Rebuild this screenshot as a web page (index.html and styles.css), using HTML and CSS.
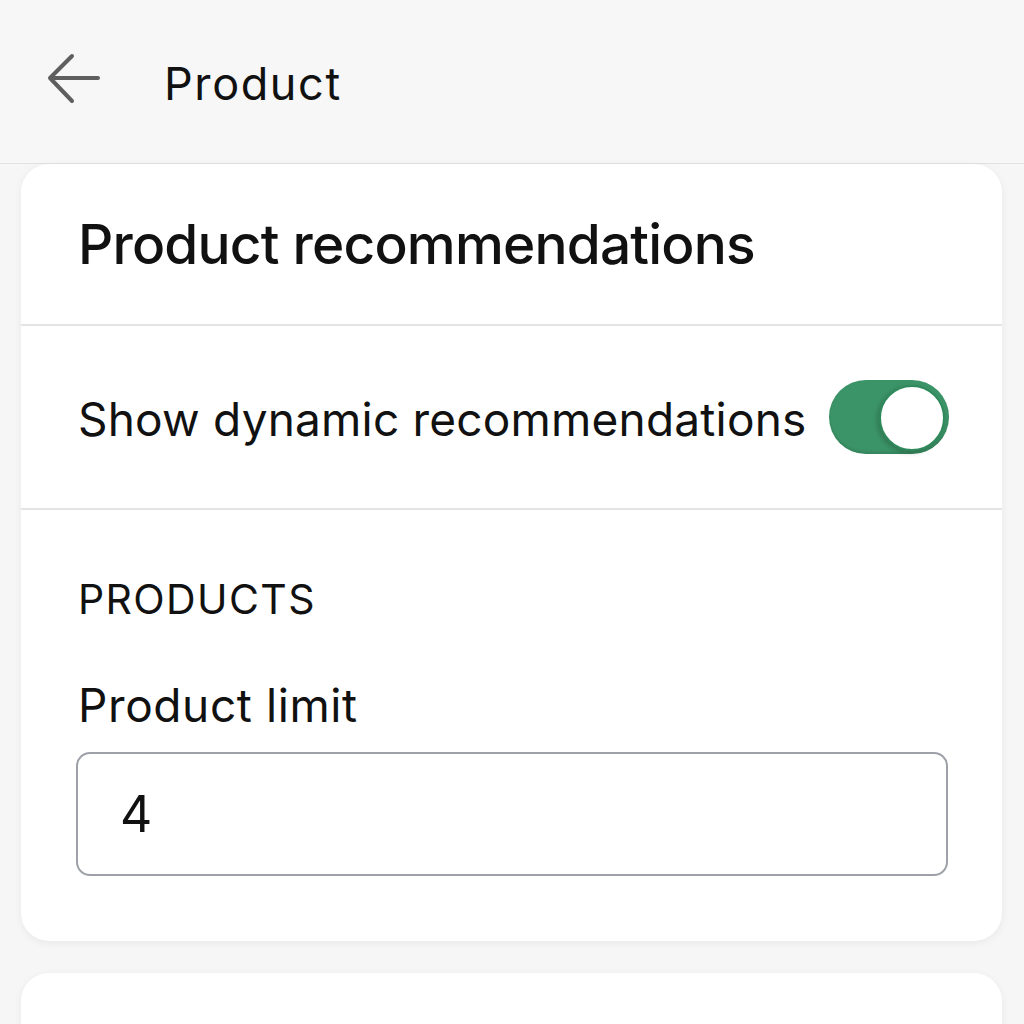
FILE: index.html
```html
<!DOCTYPE html>
<html lang="en">
<head>
<meta charset="UTF-8" />
<meta name="viewport" content="width=device-width, initial-scale=1" />
<title>Product</title>
<link rel="stylesheet" href="styles.css">
</head>
<body>
    <header class="topbar">
        <button class="back" aria-label="Back">
            <svg width="56" height="56" viewBox="0 0 56 56" fill="none" stroke="#5f5f5f" stroke-width="4" stroke-linecap="round" stroke-linejoin="round">
                <path d="M52 25H4M4 25L26 3M4 25L26 48" />
            </svg>
        </button>
        <h1 class="topbar-title">Product</h1>
    </header>

    <main class="content">
        <section class="card">
            <div class="card-head">
                <h2 class="card-title">Product recommendations</h2>
            </div>

            <div class="row toggle-row">
                <span class="row-label">Show dynamic recommendations</span>
                <label class="switch">
                    <input type="checkbox" checked />
                    <span class="track"><span class="knob"></span></span>
                </label>
            </div>

            <div class="card-body">
                <div class="section-label">PRODUCTS</div>
                <label class="field-label" for="limit">Product limit</label>
                <input class="field" id="limit" type="text" value="4" />
            </div>
        </section>

        <section class="card card-next"></section>
    </main>
</body>
</html>
```

FILE: styles.css
```css
/* General Reset */
* {
    margin: 0;
    padding: 0;
    box-sizing: border-box;
}

body {
    font-family: 'Inter', 'Roboto', sans-serif;
    background: #f6f6f6;
    color: #111;
    height: 1024px;
    overflow: hidden;
}

/* Top bar */
.topbar {
    height: 164px;
    background: #f7f7f7;
    border-bottom: 1px solid #e2e2e2;
    display: flex;
    align-items: center;
    padding-left: 46px;
}

.back {
    border: none;
    background: none;
    width: 56px;
    height: 56px;
    display: flex;
    margin-top: -2px;
}

.topbar-title {
    font-size: 45px;
    font-weight: 400;
    margin: 3px 0 0 62px;
    line-height: 1;
    letter-spacing: 1.6px;
    color: #111;
}

/* Cards */
.content {
    padding: 0 22px 0 21px;
}

.card {
    background: #fff;
    border-radius: 28px;
    box-shadow: 0 2px 8px rgba(0, 0, 0, 0.06);
}

.card-head {
    height: 162px;
    display: flex;
    align-items: center;
    padding-left: 57px;
    border-bottom: 2px solid #e4e4e6;
}

.card-title {
    font-size: 55px;
    font-weight: 500;
    line-height: 1;
    letter-spacing: -0.8px;
}

.row {
    height: 184px;
    display: flex;
    align-items: center;
    justify-content: space-between;
    padding: 0 53px 0 57px;
    border-bottom: 2px solid #e4e4e6;
}

.row-label {
    font-size: 46px;
    line-height: 1;
    letter-spacing: 0.2px;
    margin-top: 3px;
}

/* Toggle */
.switch {
    display: block;
}

.switch input {
    display: none;
}

.track {
    display: block;
    width: 120px;
    height: 74px;
    border-radius: 37px;
    background: #3b9467;
    position: relative;
    box-shadow: inset 0 -2px 3px rgba(0, 0, 0, 0.12);
}

.knob {
    position: absolute;
    top: 5px;
    right: 4px;
    width: 66px;
    height: 66px;
    border-radius: 50%;
    background: #fff;
    border: 2px solid #2f8a5b;
    box-shadow: -2px 2px 5px rgba(0, 0, 0, 0.2);
}

/* Products section */
.card-body {
    padding: 65px 54px 65px 55px;
    display: flex;
    flex-direction: column;
}

.section-label {
    font-size: 41px;
    line-height: 48px;
    letter-spacing: 1.4px;
    padding-left: 2px;
}

.field-label {
    font-size: 46px;
    line-height: 56px;
    margin-top: 54px;
    padding-left: 2px;
    letter-spacing: 0.6px;
}

.field {
    margin-top: 19px;
    height: 124px;
    border: 2px solid #9ea2a8;
    border-radius: 14px;
    padding: 0 0 0 42px;
    font-family: 'Inter', 'Roboto', sans-serif;
    font-size: 50px;
    color: #111;
    background: #fff;
    outline: none;
}

.card-next {
    margin-top: 32px;
    height: 200px;
}
```
